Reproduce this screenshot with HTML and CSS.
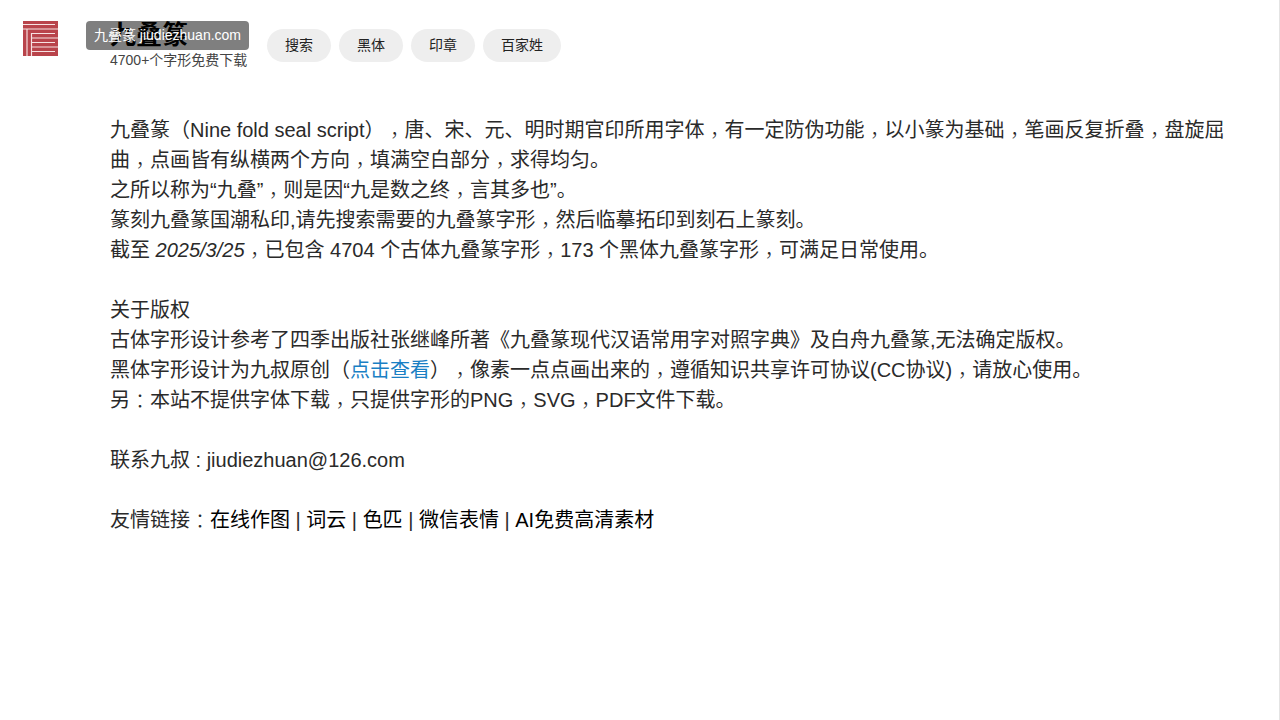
FILE: index.html
```html
<!DOCTYPE html>
<html lang="zh-CN">
<head>
<meta charset="utf-8">
<title>九叠篆</title>
<link rel="stylesheet" href="styles.css">
</head>
<body>
<div class="page">
  <header class="header">
    <svg class="logo" width="35" height="35" viewBox="0 0 35 35">
      <rect width="35" height="35" fill="#b9444b"/>
      <g fill="none" stroke="#f7e2e2" stroke-width="1.15">
        <path d="M0 3.500H32M0 8H35"/>
        <path d="M4 35V8M8.500 35V12.500H32M8.500 17H35M8.500 21.500H32M8.500 26H35M8.500 30.500H32"/>
      </g>
    </svg>
    <div class="brand">
      <div class="brand-title">九叠篆</div>
      <div class="brand-sub">4700+个字形免费下载</div>
      <div class="tooltip">九叠篆 jiudiezhuan.com</div>
    </div>
    <nav class="nav">
      <a class="pill">搜索</a>
      <a class="pill">黑体</a>
      <a class="pill">印章</a>
      <a class="pill">百家姓</a>
    </nav>
  </header>
  <main class="content">
    <p>九叠篆（Nine fold seal script）<span class="cm" lang="zh-TW">，</span>唐、宋、元、明时期官印所用字体<span class="cm" lang="zh-TW">，</span>有一定防伪功能<span class="cm" lang="zh-TW">，</span>以小篆为基础<span class="cm" lang="zh-TW">，</span>笔画反复折叠<span class="cm" lang="zh-TW">，</span>盘旋屈曲<span class="cm" lang="zh-TW">，</span>点画皆有纵横两个方向<span class="cm" lang="zh-TW">，</span>填满空白部分<span class="cm" lang="zh-TW">，</span>求得均匀。<br>
    之所以称为“九叠”<span class="cm" lang="zh-TW">，</span>则是因“九是数之终<span class="cm" lang="zh-TW">，</span>言其多也”。<br>
    篆刻九叠篆国潮私印,请先搜索需要的九叠篆字形<span class="cm" lang="zh-TW">，</span>然后临摹拓印到刻石上篆刻。<br>
    截至 <em>2025/3/25</em><span class="cm" lang="zh-TW">，</span>已包含 4704 个古体九叠篆字形<span class="cm" lang="zh-TW">，</span>173 个黑体九叠篆字形<span class="cm" lang="zh-TW">，</span>可满足日常使用。</p>
    <p>关于版权<br>
    古体字形设计参考了四季出版社张继峰所著《九叠篆现代汉语常用字对照字典》及白舟九叠篆,无法确定版权。<br>
    黑体字形设计为九叔原创（<a class="link">点击查看</a>）<span class="cm" lang="zh-TW">，</span>像素一点点画出来的<span class="cm" lang="zh-TW">，</span>遵循知识共享许可协议(CC协议)<span class="cm" lang="zh-TW">，</span>请放心使用。<br>
    另<span class="colon" lang="zh-TW">：</span>本站不提供字体下载<span class="cm" lang="zh-TW">，</span>只提供字形的PNG<span class="cm" lang="zh-TW">，</span>SVG<span class="cm" lang="zh-TW">，</span>PDF文件下载。</p>
    <p>联系九叔 : jiudiezhuan@126.com</p>
    <p>友情链接<span class="colon" lang="zh-TW">：</span><a class="friend">在线作图</a> | <a class="friend">词云</a> | <a class="friend">色匹</a> | <a class="friend">微信表情</a> | <a class="friend">AI免费高清素材</a></p>
  </main>
</div>
</body>
</html>
```
FILE: styles.css
```css
html, body {
  margin: 0;
  padding: 0;
  background: #fff;
}
body {
  font-family: "Liberation Sans", "Noto Sans CJK SC", sans-serif;
  color: #2a2a2a;
  text-spacing-trim: space-all;
}
.page {
  height: 720px;
  box-sizing: border-box;
  border-right: 1px solid #e4e4e4;
  overflow: hidden;
}
.header {
  display: flex;
  align-items: flex-start;
  padding: 21px 0 0 23px;
  height: 115px;
  box-sizing: border-box;
}
.logo {
  display: block;
  flex: none;
}
.brand {
  position: relative;
  margin-left: 52px;
  width: 157px;
}
.brand-title {
  font-size: 26px;
  font-weight: 700;
  line-height: 28px;
  color: #000;
}
.brand-sub {
  font-size: 14px;
  line-height: 20px;
  margin-top: 1px;
  color: #444;
  white-space: nowrap;
}
.tooltip {
  position: absolute;
  left: -24px;
  top: 0;
  width: 163px;
  height: 29px;
  box-sizing: border-box;
  background: rgba(0, 0, 0, 0.5);
  border-radius: 4px;
  color: #fff;
  font-size: 14px;
  line-height: 28px;
  text-align: center;
  white-space: nowrap;
}
.nav {
  display: flex;
  gap: 8px;
  margin-top: 8px;
}
.pill {
  display: block;
  height: 33px;
  line-height: 33px;
  padding: 0 18px;
  border-radius: 17px;
  background: #eee;
  font-size: 14px;
  color: #222;
}
.content {
  margin-left: 110px;
  margin-right: 50px;
  font-size: 20px;
  line-height: 30px;
}
.content p {
  margin: 0 0 30px;
}
.cm {
  font-family: "Noto Sans CJK TC", sans-serif;
  font-weight: 300;
  line-height: 0;
  vertical-align: -6px;
}
.colon {
  font-family: "Noto Sans CJK TC", sans-serif;
  font-weight: 300;
  line-height: 0;
  vertical-align: -2px;
}
.link {
  color: #1a7fc4;
}
.friend {
  color: #000;
}
```
